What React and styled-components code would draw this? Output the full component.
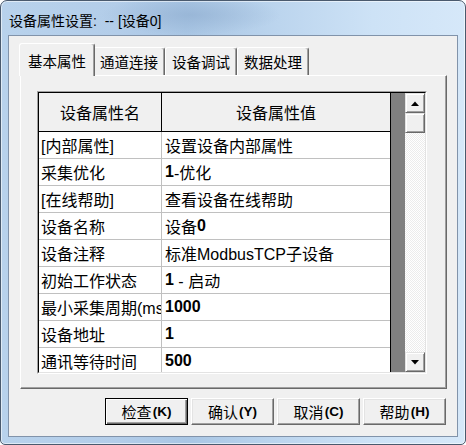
import React from 'react';
import styled, { createGlobalStyle } from 'styled-components';

const Global = createGlobalStyle`
  html, body { margin: 0; padding: 0; background: #fff; }
  body {
    width: 466px; height: 445px; overflow: hidden;
    font-family: "Liberation Sans", "Noto Sans CJK SC", sans-serif;
    color: #000;
  }
  * { box-sizing: border-box; }
`;

const Window = styled.div`
  width: 466px;
  height: 445px;
  display: flex;
  flex-direction: column;
  border: 1px solid #4a5a6e;
  border-radius: 7px 7px 5px 5px;
  overflow: hidden;
  background:
    radial-gradient(ellipse 90px 20px at 190px 14px, rgba(140,170,205,0.55), rgba(140,170,205,0) 100%),
    linear-gradient(90deg, #b8d2ec 0%, #b3cde9 25%, #a9c6e4 40%, #bcd5ee 60%, #cde2f6 80%, #d6e8f9 100%);
  box-shadow: inset 0 0 0 1px rgba(255, 255, 255, 0.55);
`;

const TitleBar = styled.div`
  height: 34px;
  flex: none;
  display: flex;
  align-items: center;
  padding: 4px 0 0 8px;
  font-size: 14px;
  white-space: pre;
  color: #000;
`;

const Client = styled.div`
  flex: 1;
  margin: 0 7px 7px 7px;
  border: 1px solid #8193aa;
  background: #f0f0f0;
  display: flex;
  flex-direction: column;
  padding: 7px 10px 0 11px;
`;

const TabStrip = styled.div`
  height: 32px;
  flex: none;
  display: flex;
  align-items: flex-end;
  padding-left: 1px;
`;

const Tab = styled.div`
  position: relative;
  z-index: ${p => (p.$active ? 2 : 1)};
  height: ${p => (p.$active ? '33px' : '28px')};
  margin: ${p => (p.$active ? '0 -2px -1px -2px' : '0')};
  padding: ${p => (p.$active ? '0 8px' : '0 6px')};
  display: flex;
  align-items: center;
  font-size: 14.5px;
  background: #f0f0f0;
  border-top: 1px solid #fff;
  border-left: 1px solid #fff;
  border-right: 1px solid #696969;
  border-radius: 3px 3px 0 0;
  box-shadow: inset -1px 0 0 #a0a0a0;
  white-space: nowrap;
`;

const Panel = styled.div`
  height: 314px;
  flex: none;
  border-top: 1px solid #fff;
  border-left: 1px solid #fff;
  border-right: 1px solid #696969;
  border-bottom: 1px solid #696969;
  box-shadow: inset -1px -1px 0 #a0a0a0;
  padding: 15px 0 0 16px;
`;

const GridFrame = styled.div`
  width: 390px;
  height: 283px;
  border: 1px solid;
  border-color: #a0a0a0 #fff #fff #a0a0a0;
`;

const GridBody = styled.div`
  width: 100%;
  height: 100%;
  border: 1px solid;
  border-color: #000 #e3e3e3 #e3e3e3 #000;
  display: flex;
  overflow: hidden;
`;

const TableArea = styled.div`
  flex: 1;
  display: flex;
  background: #808080;
  overflow: hidden;
`;

const Columns = styled.div`
  width: 352px;
  flex: none;
  background: #fff;
  border-right: 1px solid #000;
  display: flex;
  flex-direction: column;
  overflow: hidden;
`;

const HeaderRow = styled.div`
  height: 39px;
  flex: none;
  display: grid;
  grid-template-columns: 123px 1fr;
  background: #f0f0f0;
  border-bottom: 1px solid #000;
`;

const HeaderCell = styled.div`
  display: flex;
  align-items: center;
  justify-content: center;
  font-size: 16px;
  border-right: ${p => (p.$first ? '1px solid #000' : 'none')};
`;

const Row = styled.div`
  height: 27px;
  flex: none;
  display: grid;
  grid-template-columns: 123px 1fr;
  border-bottom: 1px solid #c0c0c0;
`;

const Cell = styled.div`
  display: flex;
  align-items: center;
  font-size: 16px;
  white-space: pre;
  overflow: hidden;
  padding-left: ${p => (p.$first ? '2px' : '3px')};
  border-right: ${p => (p.$first ? '1px solid #c0c0c0' : 'none')};
`;

const B = styled.span`
  font-weight: bold;
`;

const ScrollBar = styled.div`
  width: 20px;
  flex: none;
  display: flex;
  flex-direction: column;
`;

const ScrollBtn = styled.div`
  width: 20px;
  height: 20px;
  flex: none;
  display: flex;
  align-items: center;
  justify-content: center;
  background: #f0f0f0;
  border: 1px solid;
  border-color: #e3e3e3 #696969 #696969 #e3e3e3;
  box-shadow: inset 1px 1px 0 #fff, inset -1px -1px 0 #a0a0a0;
`;

const Track = styled.div`
  flex: 1;
  background: repeating-conic-gradient(#ffffff 0 25%, #ececec 0 50%) 0 0 / 2px 2px;
`;

const ButtonRow = styled.div`
  margin-top: 9px;
  height: 27px;
  flex: none;
  display: flex;
  justify-content: flex-end;
  gap: 3px;
  padding-right: 1px;
`;

const Button = styled.div`
  width: 83px;
  height: 27px;
  display: flex;
  align-items: center;
  justify-content: center;
  font-size: 15px;
  background: #f0f0f0;
  border: 1px solid;
  border-color: ${p => (p.$default ? '#000' : '#fff #696969 #696969 #fff')};
  box-shadow: ${p =>
    p.$default
      ? 'inset 1px 1px 0 #fff, inset -1px -1px 0 #696969, inset -2px -2px 0 #a0a0a0'
      : 'inset -1px -1px 0 #a0a0a0, inset 1px 1px 0 #e3e3e3'};
`;

const Key = styled.span`
  font-weight: bold;
  font-size: 13.5px;
  margin-left: 1px;
`;

const Arrow = ({ down }) => (
  <svg width="8" height="5" viewBox="0 0 8 5">
    {down ? <polygon points="0,0 8,0 4,4.5" fill="#000" /> : <polygon points="0,5 8,5 4,0.5" fill="#000" />}
  </svg>
);

const rows = [
  ['[内部属性]', '设置设备内部属性'],
  ['采集优化', <><B>1</B>-优化</>],
  ['[在线帮助]', '查看设备在线帮助'],
  ['设备名称', <>设备<B>0</B></>],
  ['设备注释', '标准ModbusTCP子设备'],
  ['初始工作状态', <><B>1</B>{' - '}启动</>],
  ['最小采集周期(ms)', <B>1000</B>],
  ['设备地址', <B>1</B>],
  ['通讯等待时间', <B>500</B>],
];

const tabs = ['基本属性', '通道连接', '设备调试', '数据处理'];

const buttons = [
  ['检查', 'K'],
  ['确认', 'Y'],
  ['取消', 'C'],
  ['帮助', 'H'],
];

export default function App() {
  return (
    <>
      <Global />
      <Window>
        <TitleBar>设备属性设置:  -- [设备0]</TitleBar>
        <Client>
          <TabStrip>
            {tabs.map((t, i) => (
              <Tab key={t} $active={i === 0}>{t}</Tab>
            ))}
          </TabStrip>
          <Panel>
            <GridFrame>
              <GridBody>
                <TableArea>
                  <Columns>
                    <HeaderRow>
                      <HeaderCell $first>设备属性名</HeaderCell>
                      <HeaderCell>设备属性值</HeaderCell>
                    </HeaderRow>
                    {rows.map(([k, v], i) => (
                      <Row key={i}>
                        <Cell $first>{k}</Cell>
                        <Cell>{v}</Cell>
                      </Row>
                    ))}
                  </Columns>
                </TableArea>
                <ScrollBar>
                  <ScrollBtn><Arrow /></ScrollBtn>
                  <ScrollBtn />
                  <Track />
                  <ScrollBtn><Arrow down /></ScrollBtn>
                </ScrollBar>
              </GridBody>
            </GridFrame>
          </Panel>
          <ButtonRow>
            {buttons.map(([t, k], i) => (
              <Button key={k} $default={i === 0}>
                {t}<Key>({k})</Key>
              </Button>
            ))}
          </ButtonRow>
        </Client>
      </Window>
    </>
  );
}
